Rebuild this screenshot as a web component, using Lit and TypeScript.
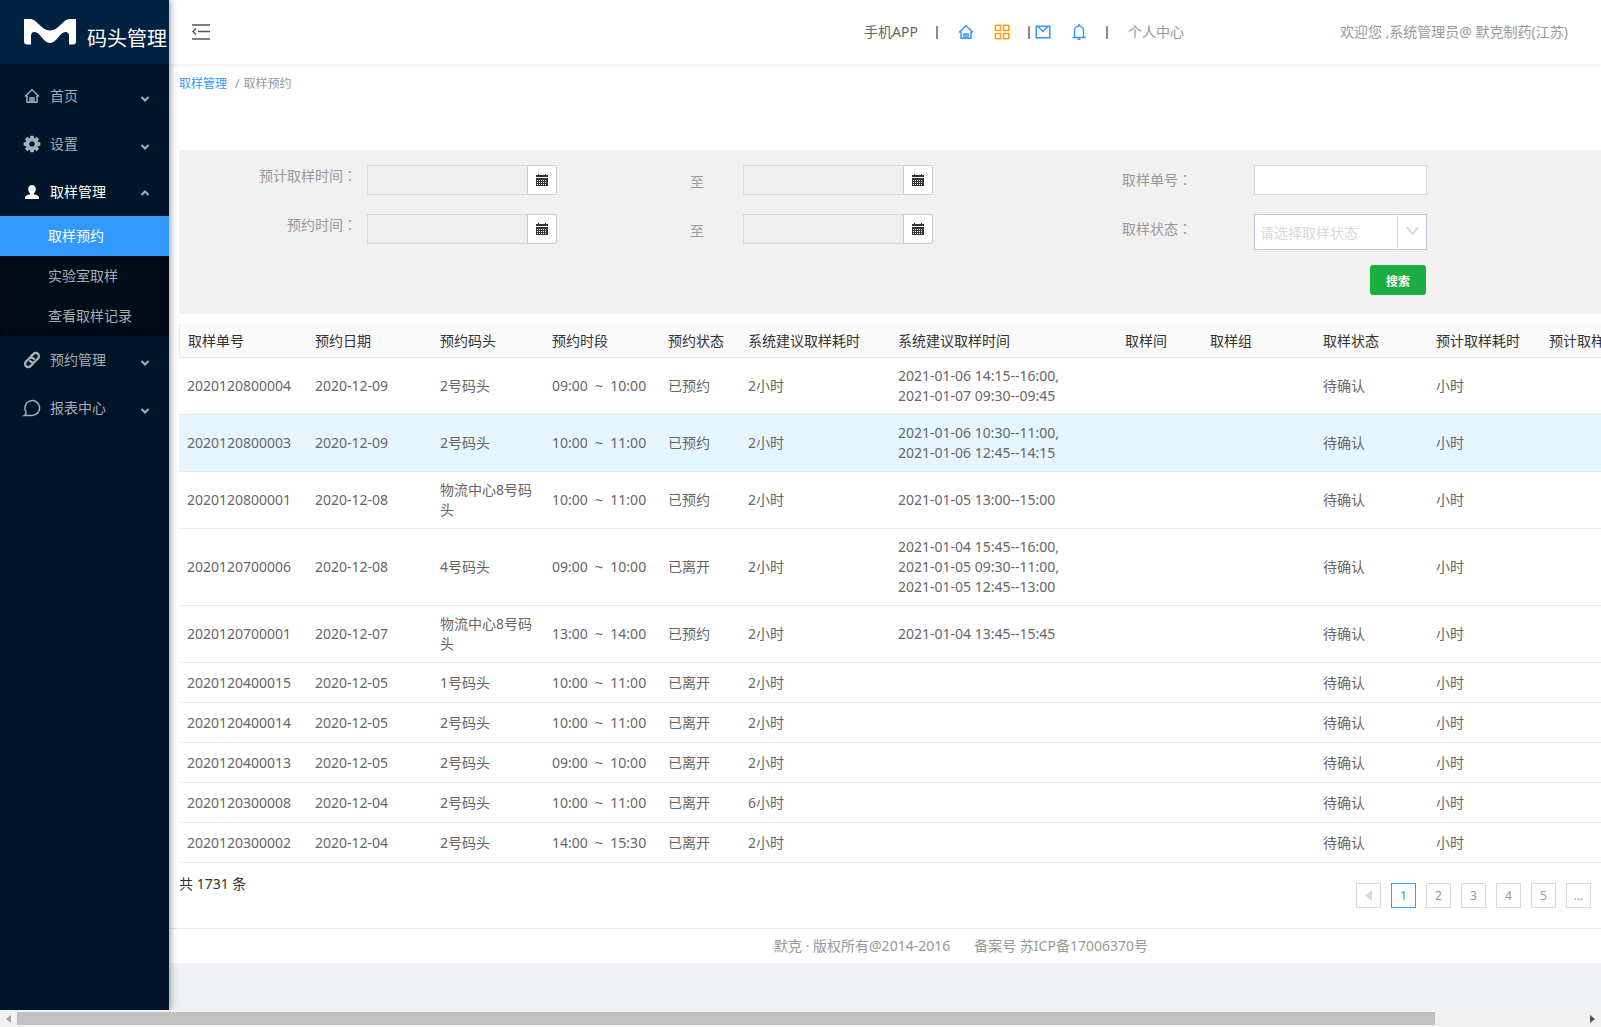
import { LitElement, html, css, svg } from "lit";
import { customElement, state } from "lit/decorators.js";
import { classMap } from "lit/directives/class-map.js";

const gearTeeth = [0, 45, 90, 135, 180, 225, 270, 315];

const icons = {
  home: svg`<path d="M1 8.500 8 1.800l7 6.700M3 7.600v6.700h10V7.600M6 14V10h4v4M8 10v4" />`,
  gear: svg`${gearTeeth.map((a) => svg`<rect class="solid" x="6" y="-.3" width="4" height="5" rx="0.8" transform="rotate(${a} 8 8)" />`)}<circle cx="8" cy="8" r="4.500" style="stroke-width:3.600" />`,
  user: svg`<path class="solid" d="M8 1c2.400 0 3.800 1.700 3.800 4 0 1.900-.8 3.300-1.800 4.100v1.100c2.600.7 5 1.500 5 3.300V15H1v-1.500c0-1.800 2.400-2.600 5-3.300V9.100C5 8.300 4.200 6.900 4.200 5 4.200 2.700 5.600 1 8 1z" />`,
  link: svg`<g transform="rotate(-45 8 8)" style="stroke-width:2.300"><path d="M7.500 11.300H2.600a3.200 3.200 0 0 1 0-6.400H7a3.200 3.200 0 0 1 2.800 4.600" /><path d="M8.500 4.700h4.900a3.200 3.200 0 0 1 0 6.400H9a3.200 3.200 0 0 1-2.800-4.600" /></g>`,
  message: svg`<path d="M.8 15.400h7.400a7.400 7.400 0 1 0-6.200-3.400c.2 1.200-.3 2.700-1.400 3.400z" style="stroke-width:1.500" />`,
};

interface MenuEntry {
  text: string;
  icon: keyof typeof icons;
  children?: string[];
}

const menu: MenuEntry[] = [
  { text: "首页", icon: "home" },
  { text: "设置", icon: "gear" },
  { text: "取样管理", icon: "user", children: ["取样预约", "实验室取样", "查看取样记录"] },
  { text: "预约管理", icon: "link" },
  { text: "报表中心", icon: "message" },
];

const columns = [
  "取样单号", "预约日期", "预约码头", "预约时段", "预约状态", "系统建议取样耗时",
  "系统建议取样时间", "取样间", "取样组", "取样状态", "预计取样耗时", "预计取样",
];

interface Booking {
  no: string;
  date: string;
  dock: string;
  from: string;
  to: string;
  status: string;
  cost: string;
  times: string[];
}

const b = (no: string, date: string, dock: string, from: string, to: string, status: string, cost: string, ...times: string[]): Booking =>
  ({ no, date, dock, from, to, status, cost, times });

const bookings: Booking[] = [
  b("2020120800004", "2020-12-09", "2号码头", "09:00", "10:00", "已预约", "2小时", "2021-01-06 14:15--16:00,", "2021-01-07 09:30--09:45"),
  b("2020120800003", "2020-12-09", "2号码头", "10:00", "11:00", "已预约", "2小时", "2021-01-06 10:30--11:00,", "2021-01-06 12:45--14:15"),
  b("2020120800001", "2020-12-08", "物流中心8号码头", "10:00", "11:00", "已预约", "2小时", "2021-01-05 13:00--15:00"),
  b("2020120700006", "2020-12-08", "4号码头", "09:00", "10:00", "已离开", "2小时", "2021-01-04 15:45--16:00,", "2021-01-05 09:30--11:00,", "2021-01-05 12:45--13:00"),
  b("2020120700001", "2020-12-07", "物流中心8号码头", "13:00", "14:00", "已预约", "2小时", "2021-01-04 13:45--15:45"),
  b("2020120400015", "2020-12-05", "1号码头", "10:00", "11:00", "已离开", "2小时"),
  b("2020120400014", "2020-12-05", "2号码头", "10:00", "11:00", "已离开", "2小时"),
  b("2020120400013", "2020-12-05", "2号码头", "09:00", "10:00", "已离开", "2小时"),
  b("2020120300008", "2020-12-04", "2号码头", "10:00", "11:00", "已离开", "6小时"),
  b("2020120300002", "2020-12-04", "2号码头", "14:00", "15:30", "已离开", "2小时"),
];

@customElement("side-menu")
export class SideMenu extends LitElement {
  static styles = css`
    :host { display: block; background: #001529; color: #a6adb4; }
    .brand { height: 64px; background: #002140; display: flex; align-items: center; padding-left: 24px; gap: 11px; overflow: hidden; color: #fff; }
    .brand svg { width: 52px; height: 26px; flex: none; fill: #fff; }
    .brand span { font-size: 20px; line-height: 24px; white-space: nowrap; padding-top: 14px; }
    ul { list-style: none; margin: 0; padding: 0; }
    .menu { padding-top: 8px; }
    button { all: unset; box-sizing: border-box; width: 100%; height: 48px; padding: 0 19px 0 24px; display: flex; align-items: center; gap: 10px; cursor: pointer; }
    .icon { width: 16px; height: 16px; fill: none; stroke: currentColor; stroke-width: 1.5; overflow: visible; }
    .solid { fill: currentColor; stroke: none; }
    .text { flex: 1; }
    .arrow { width: 10px; height: 10px; margin-top: 6px; fill: none; stroke: #a6adb4; stroke-width: 2; }
    .open button { color: #fff; }
    .open .arrow { transform: rotate(180deg); margin-top: 2px; }
    .sub { background: #000c17; box-shadow: inset 0 2px 8px rgba(0, 0, 0, 0.45); }
    a { display: block; height: 40px; line-height: 40px; padding-left: 48px; color: #a6adb4; text-decoration: none; }
    a.active { background: #3399ff; color: #fff; }
  `;

  @state() private active = "取样预约";

  render() {
    return html`
      <div class="brand">
        <svg viewBox="0 0 52 26" aria-hidden="true"><path d="M0 0h6.500C13 0 17 11.500 26 11.500S39 0 45.500 0H52v22.500Q52 25.500 49 25.500H45V17Q45 13 41.500 13C35.500 13 33 24 26 24S16.500 13 10.500 13Q7 13 7 17v8.500H3Q0 25.500 0 22.500z" /></svg>
        <span>码头管理</span>
      </div>
      <nav><ul class="menu">${menu.map((m) => html`
        <li class=${classMap({ open: !!m.children })}>
          <button type="button" aria-expanded=${m.children ? "true" : "false"}>
            <svg class="icon" viewBox="0 0 16 16" aria-hidden="true">${icons[m.icon]}</svg>
            <span class="text">${m.text}</span>
            <svg class="arrow" viewBox="0 0 10 10" aria-hidden="true"><path d="M1.500 3 5 6.500 8.500 3" /></svg>
          </button>
          ${m.children ? html`<ul class="sub">${m.children.map((c) => html`
            <li><a href="#" class=${classMap({ active: c === this.active })} @click=${() => (this.active = c)}>${c}</a></li>`)}</ul>` : null}
        </li>`)}</ul></nav>`;
  }
}

@customElement("top-bar")
export class TopBar extends LitElement {
  static styles = css`
    :host { display: flex; align-items: center; height: 64px; padding: 0 33px 0 23px; background: #fff; box-shadow: 0 1px 4px rgba(0, 21, 41, 0.08); color: #999; white-space: nowrap; }
    button, a { all: unset; cursor: pointer; display: flex; }
    svg { fill: none; stroke: currentColor; stroke-width: 1.5; width: 16px; height: 16px; }
    .toggle svg { width: 18px; height: 18px; stroke: #555; }
    .tools { display: flex; align-items: center; margin-left: auto; }
    .tools i { width: 2px; height: 13px; background: #8c8c8c; }
    .app { color: #666; margin-right: 18px; }
    .blue { color: #3399ff; }
    .orange { color: #ff9f0f; }
    .home { margin: 0 20px; }
    .grid { margin-right: 18px; }
    .mail { margin: 0 20px 0 5px; }
    .bell { margin-right: 19px; }
    .me { margin-left: 20px; }
    .hello { margin-left: 156px; }
  `;

  render() {
    return html`
      <button type="button" class="toggle" aria-label="菜单">
        <svg viewBox="0 0 18 18"><path d="M0 2h18M6 8.500h12M0 16h18M4 5.500 1 8.500l3 3" /></svg>
      </button>
      <div class="tools">
        <a href="#" class="app">手机APP</a><i></i>
        <a href="#" class="blue home" aria-label="首页"><svg viewBox="0 0 16 16">${icons.home}</svg></a>
        <a href="#" class="orange grid" aria-label="应用"><svg viewBox="0 0 16 16"><path d="M1.300 1.300h5.200v5.200H1.300zM9.500 1.300h5.200v5.200H9.500zM1.300 9.500h5.200v5.200H1.300zM9.500 9.500h5.200v5.200H9.500z" /></svg></a><i></i>
        <a href="#" class="blue mail" aria-label="邮件"><svg viewBox="0 0 16 16"><path d="M1.200 2.200h13.600v11.600H1.200zM3 2.500l5 5 5-5" /></svg></a>
        <a href="#" class="blue bell" aria-label="通知"><svg viewBox="0 0 16 16"><path d="M1.500 13.500h13M3.500 13.500V6.500a4.500 4.500 0 0 1 9 0v7M8 0v2M6.500 15.200h3" /></svg></a><i></i>
        <a href="#" class="me">个人中心</a>
        <span class="hello">欢迎您 ,系统管理员@ 默克制药(江苏)</span>
      </div>`;
  }
}

@customElement("search-panel")
export class SearchPanel extends LitElement {
  static styles = css`
    form { display: grid; grid-template-columns: 178fr 190px 166fr 190px 301fr 173px 164fr; grid-template-rows: 49px 51px 30px; column-gap: 10px; align-items: start; background: #f1f1f1; padding: 15px 0 19px; color: #999; }
    label { justify-self: end; line-height: 20px; }
    .colon { font-family: "Noto Sans CJK TC", sans-serif; }
    .to { line-height: 34px; padding-right: 29px; }
    .far { line-height: 28px; padding-right: 52px; }
    input, select, button { box-sizing: border-box; font: inherit; margin: 0; border-radius: 0; outline: none; min-width: 0; }
    .date { display: flex; }
    input { flex: 1; width: 100%; height: 30px; border: 1px solid #d9d9d9; background: #fff; padding: 0 5px; }
    .date input { background: #eee; border-right: 0; }
    .date button { width: 30px; height: 30px; padding: 0; border: 1px solid #ccc; border-radius: 0 2px 2px 0; background: #fff; display: grid; place-items: center; }
    .date svg { width: 12px; height: 12px; fill: #333; }
    .holes { stroke: #fff; stroke-width: 1; stroke-dasharray: 1 1; }
    .status { display: grid; grid-template-columns: 1fr 30px; height: 36px; }
    .status > * { grid-row: 1; }
    select { grid-column: 1 / 3; width: 100%; appearance: none; border: 1px solid #bfc9d6; background: #fff; color: #d9d9d9; padding: 2px 5px 0; }
    .status svg { grid-column: 2; z-index: 1; pointer-events: none; box-sizing: border-box; width: 30px; height: 36px; border-left: 1px solid #d9d9d9; fill: none; stroke: #d9d9d9; stroke-width: 2; }
    .search { grid-area: 3 / 6; justify-self: end; width: 56px; height: 30px; margin-right: 1px; border: 0; border-radius: 3px; background: #1aad3f; color: #fff; font-size: 12px; font-weight: bold; padding: 3px 0 0; }
  `;

  private date(id: string) {
    return html`<div class="date"><input id=${id} type="text" readonly /><button type="button" aria-label="选择日期">
      <svg viewBox="0 0 12 12"><path d="M0 1h2V0h1v1h6V0h1v1h2v2H0zM0 4h12v8H0z" /><path class="holes" d="M1 6.500h10M1 8.500h10M1 10.500h10" /></svg></button></div>`;
  }

  render() {
    const colon = html`<span class="colon">：</span>`;
    return html`<form @submit=${(e: Event) => e.preventDefault()}>
      <label for="plan-from">预计取样时间${colon}</label>${this.date("plan-from")}
      <label class="to" for="plan-to">至</label>${this.date("plan-to")}
      <label class="far" for="number">取样单号${colon}</label><input id="number" type="text" /><span></span>
      <label for="book-from">预约时间${colon}</label>${this.date("book-from")}
      <label class="to" for="book-to">至</label>${this.date("book-to")}
      <label class="far" for="status">取样状态${colon}</label>
      <div class="status"><select id="status"><option>请选择取样状态</option></select>
        <svg viewBox="0 0 30 36" aria-hidden="true"><path d="M9 13l6 7 6-7" /></svg></div>
      <button type="submit" class="search">搜索</button>
    </form>`;
  }
}

@customElement("booking-table")
export class BookingTable extends LitElement {
  static styles = css`
    :host { display: block; }
    table { table-layout: fixed; width: 100%; min-width: 1574px; border-collapse: separate; border-spacing: 0; color: #666; }
    th { box-sizing: border-box; height: 34px; padding: 0 8px; text-align: left; font-weight: normal; color: #333; background: #fafafa; border-bottom: 1px solid #e9e9e9; white-space: nowrap; }
    th:first-child { border-left: 1px solid #e9e9e9; }
    td { box-sizing: border-box; height: 40px; padding: 8px; line-height: 20px; border-bottom: 1px solid #e9e9e9; vertical-align: middle; }
    .nowrap { white-space: pre; }
    .hover td { background: #e5f6ff; }
    .c0 { width: 128px; } .c1 { width: 125px; } .c2 { width: 112px; } .c3 { width: 116px; }
    .c4 { width: 80px; } .c5 { width: 150px; } .c6 { width: 227px; } .c7 { width: 85px; }
    .c8, .c9, .c10 { width: 113px; }
  `;

  @state() private hovered = 1;

  render() {
    return html`<table>
      <colgroup>${columns.map((_, i) => html`<col class="c${i}" />`)}</colgroup>
      <thead><tr>${columns.map((c) => html`<th scope="col">${c}</th>`)}</tr></thead>
      <tbody>${bookings.map((r, i) => html`
        <tr class=${classMap({ hover: i === this.hovered })} @mouseenter=${() => (this.hovered = i)}>
          <td>${r.no}</td><td>${r.date}</td><td>${r.dock}</td>
          <td class="nowrap">${`${r.from}  ~  ${r.to}`}</td>
          <td>${r.status}</td><td>${r.cost}</td><td class="nowrap">${r.times.join("\n")}</td>
          <td></td><td></td><td>待确认</td><td>小时</td><td></td>
        </tr>`)}</tbody>
    </table>`;
  }
}

@customElement("page-list")
export class PageList extends LitElement {
  static styles = css`
    nav { display: flex; gap: 10px; }
    button { box-sizing: border-box; width: 25px; height: 25px; padding: 0; border: 1px solid #d9d9d9; background: #fff; color: #999; font: inherit; font-size: 12px; line-height: 22px; display: grid; place-items: center; }
    .current { border-color: #3399ff; color: #3399ff; }
    svg { width: 8px; height: 11px; fill: #d9d9d9; }
  `;

  @state() private page = "1";

  render() {
    return html`<nav aria-label="分页">
      <button type="button" aria-label="上一页" disabled><svg viewBox="0 0 8 11"><path d="M7 0v11L0 5.500z" /></svg></button>
      ${["1", "2", "3", "4", "5", "..."].map((p) => html`<button type="button" class=${classMap({ current: p === this.page })} @click=${() => (this.page = p)}>${p}</button>`)}
    </nav>`;
  }
}

@customElement("app-root")
export class AppRoot extends LitElement {
  static styles = css`
    :host { display: flex; flex-direction: column; min-height: 100vh; font: 14px/20px "Noto Sans", "Noto Sans CJK SC", sans-serif; background: #eff1f5; }
    .shell { flex: 1; display: grid; grid-template-columns: 169px minmax(0, 1fr); }
    side-menu { z-index: 2; box-shadow: 2px 0 6px rgba(0, 21, 41, 0.35); clip-path: inset(0 -10px 0 0); }
    .content { overflow: hidden; }
    top-bar { position: relative; z-index: 1; }
    main { background: #fff; padding: 11px 0 0 10px; }
    .crumbs { display: flex; gap: 4px; font-size: 12px; line-height: 18px; margin-bottom: 57px; color: #999; }
    .crumbs a { color: #3399ff; text-decoration: none; margin-right: 4px; }
    booking-table { margin-top: 10px; }
    .summary { display: flex; justify-content: space-between; padding: 11px 10px 20px 0; color: #333; }
    page-list { margin-top: 9px; }
    footer { box-sizing: border-box; min-width: 1584px; height: 35px; border-top: 1px solid #e9e9e9; background: #fff; color: #999; display: flex; justify-content: center; align-items: center; gap: 24px; }
    .scroll { height: 17px; display: grid; grid-template-columns: 17px 1418fr 149fr 17px; align-items: center; justify-items: center; background: #f1f1f1; }
    .scroll svg { width: 5px; height: 8px; fill: #505050; }
    .scroll .off { fill: #a3a3a3; }
    .thumb { justify-self: stretch; height: 13px; background: #c1c1c1; }
    .end { grid-column: 4; }
  `;

  render() {
    return html`
      <div class="shell">
        <side-menu></side-menu>
        <div class="content">
          <top-bar></top-bar>
          <main>
            <div class="crumbs"><a href="#">取样管理</a><span>/</span><span>取样预约</span></div>
            <search-panel></search-panel>
            <booking-table></booking-table>
            <div class="summary"><span>共 1731 条</span><page-list></page-list></div>
          </main>
          <footer><span>默克 · 版权所有@2014-2016</span><span>备案号 苏ICP备17006370号</span></footer>
        </div>
      </div>
      <div class="scroll">
        <svg class="off" viewBox="0 0 5 8"><path d="M5 0v8L0 4z" /></svg>
        <div class="thumb"></div>
        <svg class="end" viewBox="0 0 5 8"><path d="M0 0v8l5-4z" /></svg>
      </div>`;
  }
}
